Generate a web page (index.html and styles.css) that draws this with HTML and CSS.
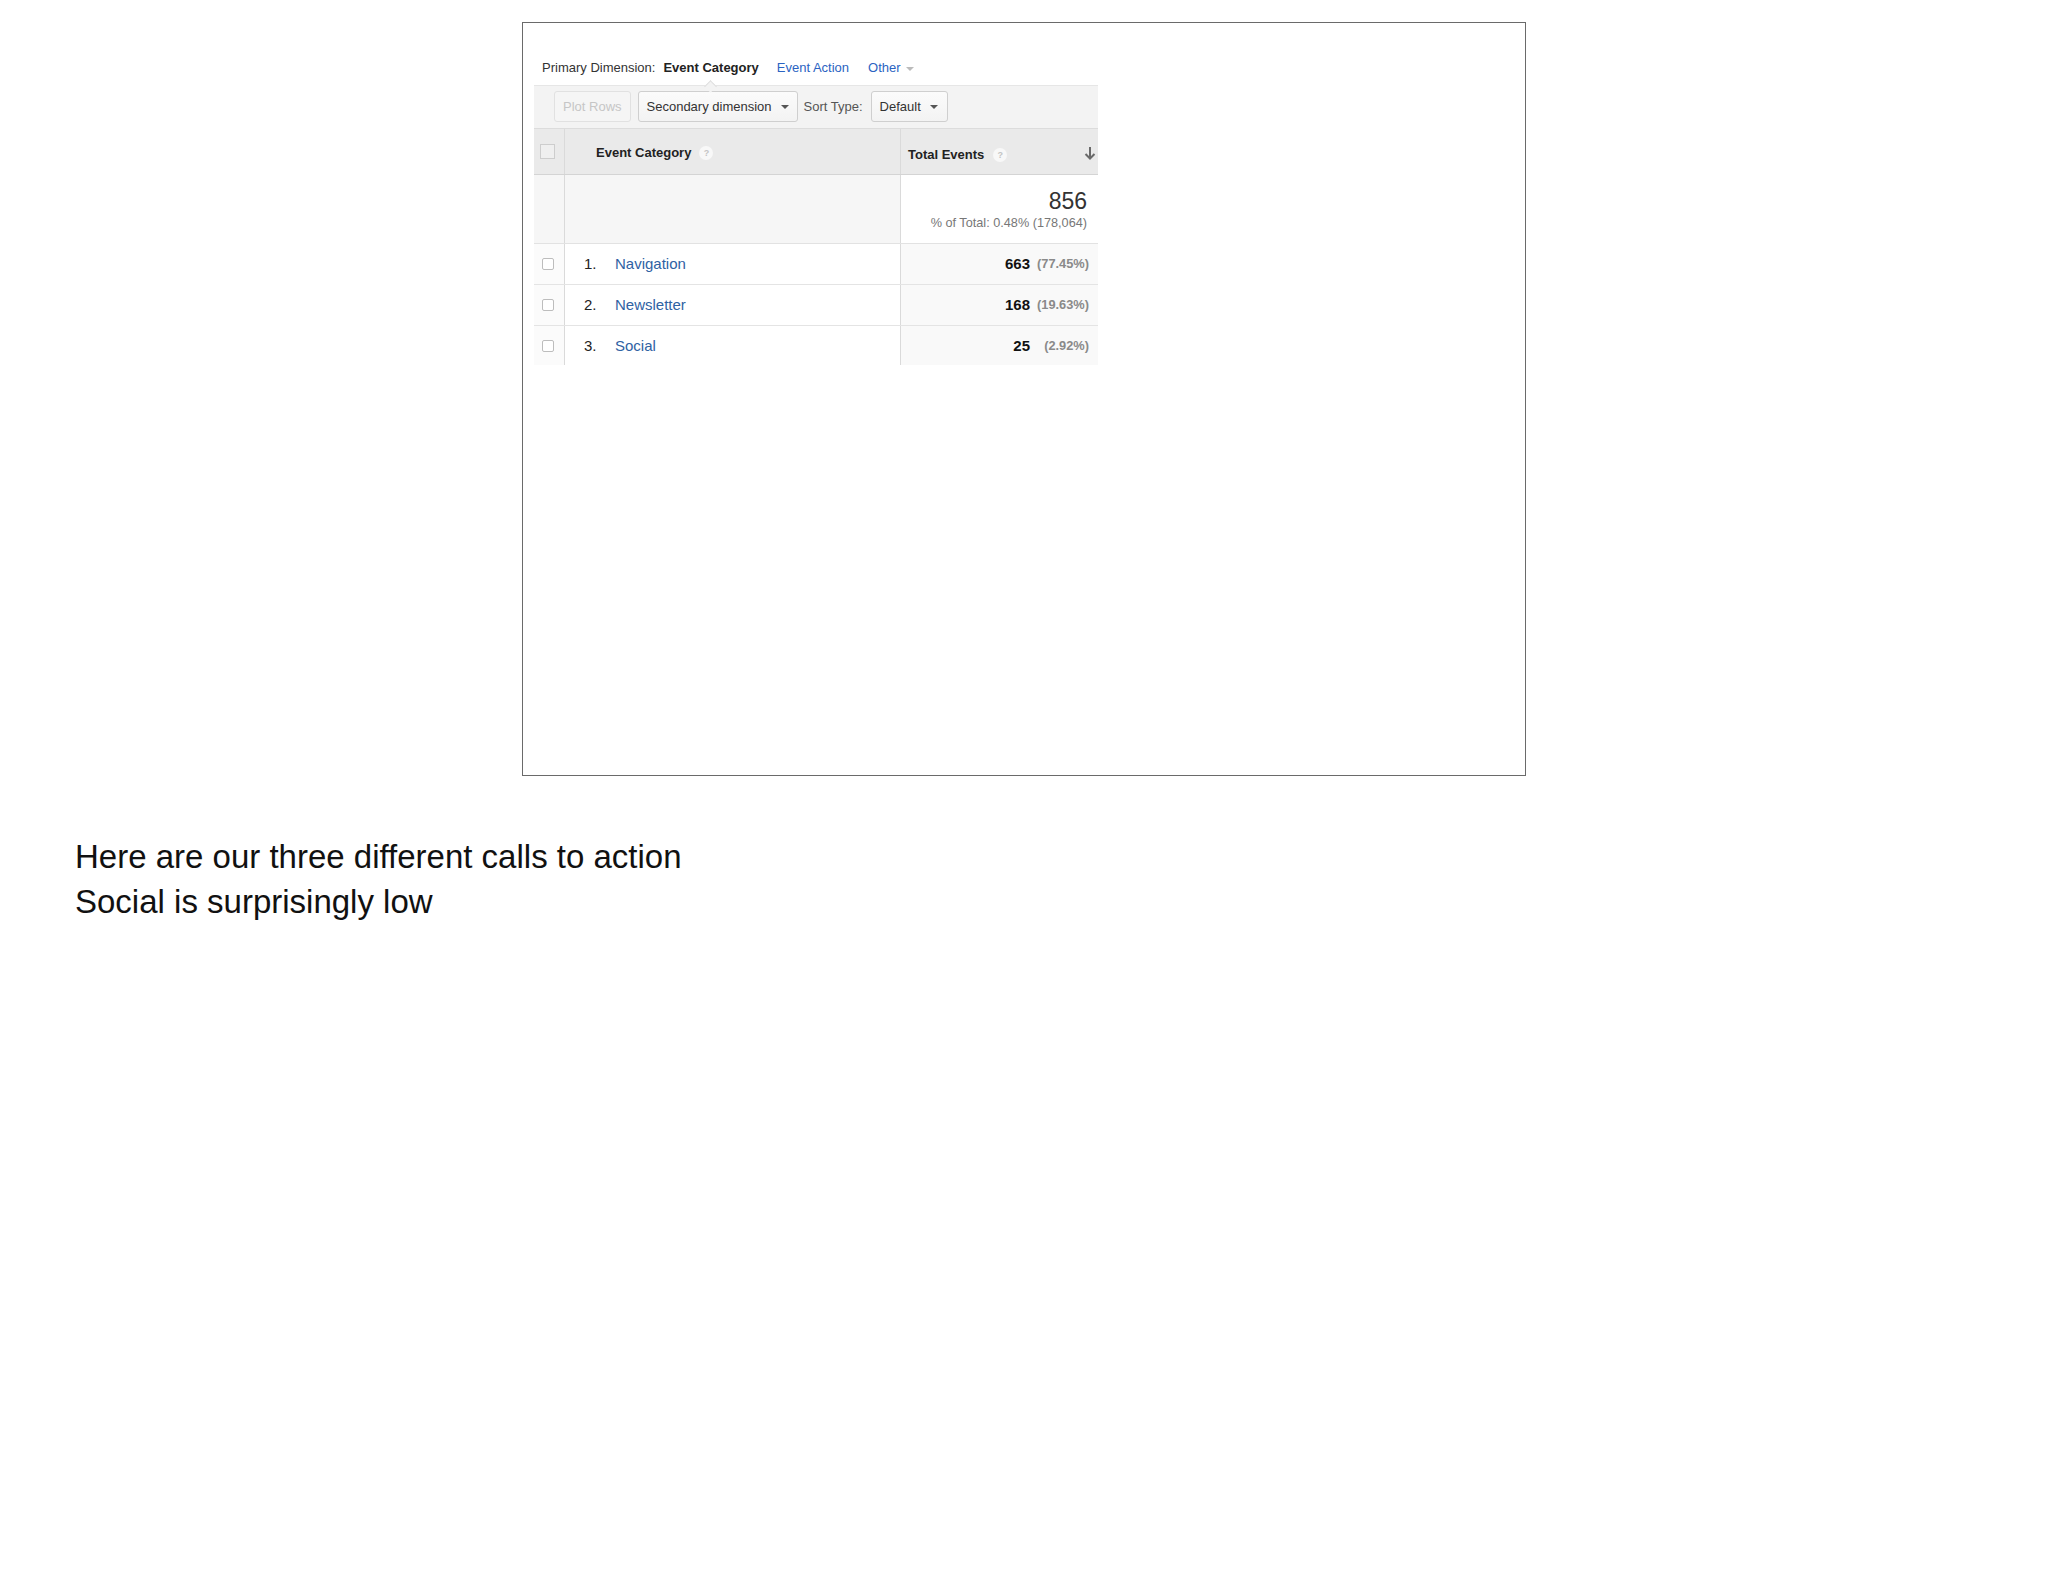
FILE: index.html
```html
<!DOCTYPE html>
<html>
<head>
<meta charset="utf-8">
<link rel="stylesheet" href="styles.css">
</head>
<body>
<div class="frame">
  <div class="ga">
    <div class="dimbar">
      <span class="dim-label">Primary Dimension:</span>
      <span class="dim-active">Event Category<span class="notch"></span></span>
      <span class="dim-link">Event Action</span>
      <span class="dim-link other">Other<span class="caret light"></span></span>
    </div>
    <div class="toolbar">
      <span class="btn disabled">Plot Rows</span>
      <span class="btn sec">Secondary dimension<span class="caret"></span></span>
      <span class="sort-label">Sort Type:</span>
      <span class="btn def">Default<span class="caret"></span></span>
    </div>
    <div class="row head">
      <div class="c-chk"><span class="hchk"></span></div>
      <div class="c-cat"><span class="htext">Event Category</span><span class="help">?</span></div>
      <div class="c-val"><span class="htext">Total Events</span><span class="help">?</span>
        <svg class="sortarrow" width="12" height="14" viewBox="0 0 12 14"><path d="M6 1V12.5M1.5 8L6 12.5L10.5 8" fill="none" stroke="#6a6a6a" stroke-width="2"/></svg>
      </div>
    </div>
    <div class="row total">
      <div class="c-chk"></div>
      <div class="c-cat"></div>
      <div class="c-val">
        <div class="big">856</div>
        <div class="pct-total">% of Total: 0.48% (178,064)</div>
      </div>
    </div>
    <div class="row data">
      <div class="c-chk"><span class="chk"></span></div>
      <div class="c-cat"><span class="num">1.</span><span class="link">Navigation</span></div>
      <div class="c-val"><span class="v">663</span><span class="p">(77.45%)</span></div>
    </div>
    <div class="row data">
      <div class="c-chk"><span class="chk"></span></div>
      <div class="c-cat"><span class="num">2.</span><span class="link">Newsletter</span></div>
      <div class="c-val"><span class="v">168</span><span class="p">(19.63%)</span></div>
    </div>
    <div class="row data last">
      <div class="c-chk"><span class="chk"></span></div>
      <div class="c-cat"><span class="num">3.</span><span class="link">Social</span></div>
      <div class="c-val"><span class="v">25</span><span class="p">(2.92%)</span></div>
    </div>
  </div>
</div>
<div class="notes">
  <div>Here are our three different calls to action</div>
  <div>Social is surprisingly low</div>
</div>
</body>
</html>
```

FILE: styles.css
```css
html, body {
  margin: 0;
  padding: 0;
  background: #ffffff;
}
body {
  width: 2048px;
  height: 1582px;
  font-family: "Liberation Sans", Arial, Helvetica, sans-serif;
  color: #222;
}
.frame {
  box-sizing: border-box;
  margin: 22px 0 0 522px;
  width: 1004px;
  height: 754px;
  border: 1px solid #6a6a6a;
  padding: 0 0 0 11px;
}
.ga {
  width: 564px;
  font-size: 13px;
}
.dimbar {
  margin-top: 29px;
  height: 33px;
  line-height: 32px;
  padding-left: 8px;
  display: flex;
  align-items: flex-start;
  color: #333;
  white-space: nowrap;
}
.dim-label { margin-right: 8px; }
.dim-active {
  position: relative;
  font-weight: bold;
  color: #222;
  margin-right: 18px;
}
.notch {
  position: absolute;
  left: 50%;
  bottom: -7px;
  width: 9px;
  height: 9px;
  margin-left: -5px;
  background: #f3f3f3;
  border-left: 1px solid #dedede;
  border-top: 1px solid #dedede;
  transform: rotate(45deg);
  box-sizing: border-box;
}
.dim-link {
  color: #2b63c2;
  margin-right: 18px;
  display: inline-flex;
  align-items: center;
}
.dim-link.other { margin-left: 1px; }
.caret {
  display: inline-block;
  width: 0;
  height: 0;
  border-left: 4px solid transparent;
  border-right: 4px solid transparent;
  border-top: 4px solid #555;
  margin-left: 9px;
}
.caret.light {
  border-top-color: #bbb;
  margin-left: 5px;
  margin-top: 1px;
}
.toolbar {
  box-sizing: border-box;
  height: 43px;
  background: #f3f3f3;
  border-top: 1px solid #e6e6e6;
  padding: 5px 0 0 20px;
  display: flex;
  align-items: flex-start;
  white-space: nowrap;
}
.btn {
  box-sizing: border-box;
  height: 31px;
  display: inline-flex;
  align-items: center;
  padding: 0 9px;
  border: 1px solid #cfcfcf;
  border-radius: 3px;
  background: linear-gradient(#fbfbfb, #f3f3f3);
  color: #333;
  margin-right: 7px;
  white-space: nowrap;
  flex: none;
}
.btn.disabled {
  padding: 0 8px;
  border-color: #e1e1e1;
  color: #c6c6c6;
  background: #f5f5f5;
}
.btn.sec { padding: 0 8px 0 8px; margin-right: 6px; }
.btn.def { margin-left: 8px; padding: 0 9px 0 8px; }
.sort-label {
  line-height: 31px;
  color: #555;
}
.row {
  display: flex;
  width: 564px;
}
.c-chk {
  box-sizing: border-box;
  width: 31px;
  border-right: 1px solid #dadada;
}
.c-cat {
  box-sizing: border-box;
  width: 336px;
  border-right: 1px solid #dadada;
  display: flex;
  align-items: center;
}
.c-val {
  box-sizing: border-box;
  width: 197px;
  display: flex;
  align-items: center;
  white-space: nowrap;
}
.head {
  box-sizing: border-box;
  height: 47px;
  background: #eaeaea;
  border-top: 1px solid #dcdcdc;
  border-bottom: 1px solid #d4d4d4;
  font-weight: bold;
  color: #222;
}
.head .c-chk {
  display: flex;
  align-items: center;
  padding-left: 6px;
  padding-bottom: 1px;
}
.hchk {
  box-sizing: border-box;
  width: 15px;
  height: 15px;
  border: 1px solid #cdcdcd;
  background: #efefef;
}
.head .c-cat {
  padding-left: 31px;
  padding-top: 2px;
}
.head .c-val {
  padding-left: 7px;
  padding-top: 6px;
  padding-right: 2px;
}
.help {
  box-sizing: border-box;
  width: 14px;
  height: 14px;
  border-radius: 50%;
  background: #f8f8f8;
  color: #c4c4c4;
  font-size: 9px;
  font-weight: bold;
  line-height: 14px;
  text-align: center;
  margin-left: 8px;
}
.c-val .help { margin-left: 9px; }
.sortarrow {
  margin-left: auto;
  margin-top: -4px;
}
.total {
  box-sizing: border-box;
  height: 69px;
  border-bottom: 1px solid #e2e2e2;
}
.total .c-chk, .total .c-cat {
  background: #f6f6f6;
}
.total .c-val {
  display: block;
  background: #ffffff;
  text-align: right;
  padding: 13px 11px 0 0;
}
.big {
  font-size: 23px;
  line-height: 26px;
  color: #333;
}
.pct-total {
  font-size: 12.7px;
  line-height: 18px;
  color: #777;
}
.data {
  box-sizing: border-box;
  height: 41px;
  border-bottom: 1px solid #e4e4e4;
  font-size: 15px;
}
.data.last {
  height: 39px;
  border-bottom: none;
}
.data .c-chk {
  background: #fbfbfb;
  display: flex;
  align-items: center;
  padding-left: 8px;
}
.chk {
  box-sizing: border-box;
  width: 12px;
  height: 12px;
  border: 1px solid #bdbdbd;
  border-radius: 2px;
  background: #fff;
}
.data .c-cat {
  background: #fff;
  padding-left: 19px;
  padding-bottom: 1px;
}
.num {
  width: 31px;
  color: #222;
}
.link {
  color: #2f62a3;
}
.data .c-val {
  background: #f9f9f9;
  justify-content: flex-end;
  padding-right: 9px;
  padding-bottom: 1px;
}
.v {
  font-weight: bold;
  color: #111;
}
.p {
  width: 59px;
  text-align: right;
  font-size: 12.8px;
  font-weight: bold;
  color: #8a8a8a;
}
.notes {
  margin: 59px 0 0 75px;
  font-size: 33px;
  line-height: 44.5px;
  color: #111;
}
```
